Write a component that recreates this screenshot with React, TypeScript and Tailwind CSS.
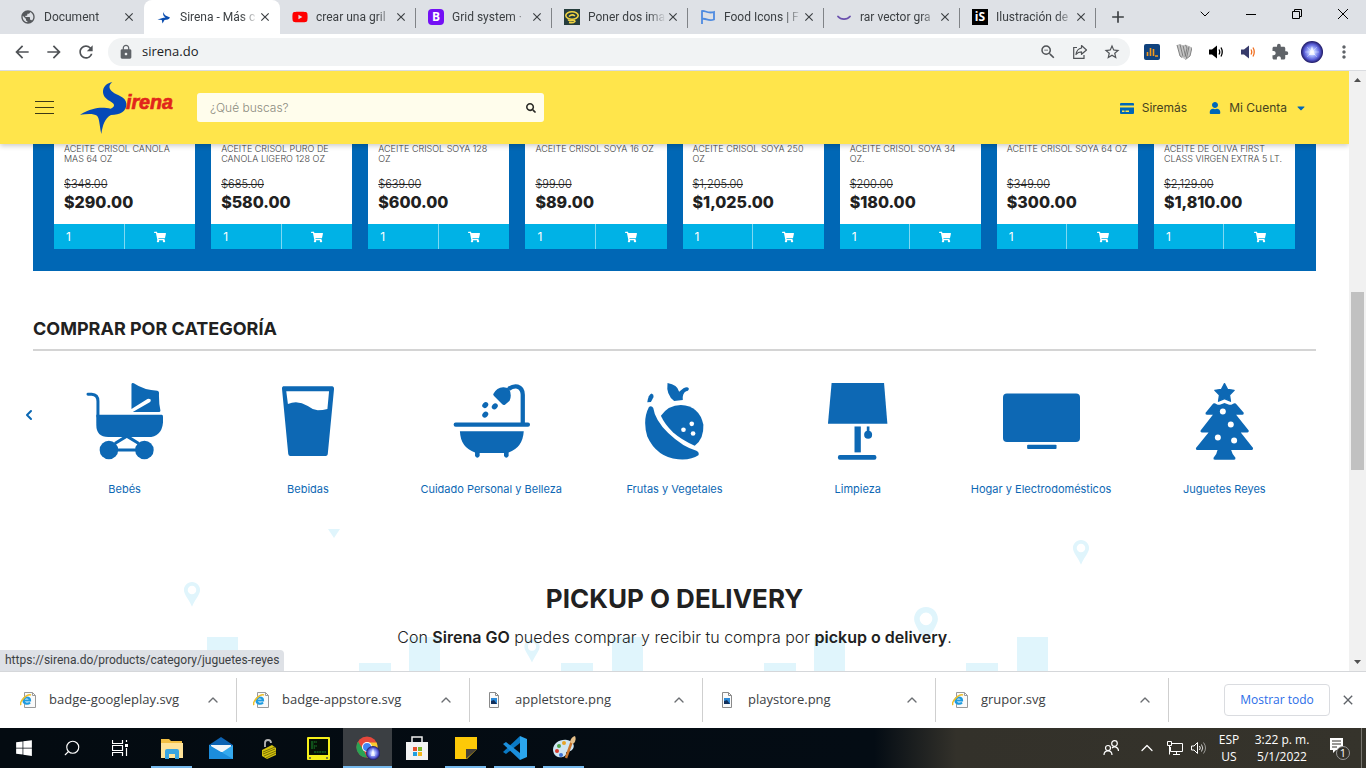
import type { ReactNode } from "react";
import {
  MdAdd,
  MdArrowBack,
  MdArrowForward,
  MdClose,
  MdExtension,
  MdLock,
  MdMoreVert,
  MdPublic,
  MdRefresh,
  MdStarBorder,
  MdZoomOut,
} from "react-icons/md";
import { FaCaretDown, FaSearch, FaShoppingCart, FaUser, FaWindows, FaYoutube } from "react-icons/fa";
import { ChevronDown, ChevronLeft, ChevronUp, Search } from "lucide-react";

/* ---------- Browser tabs ---------- */

const SirenaMark = () => (
  <svg viewBox="0 0 16 16" className="size-4">
    <path d="M9 2C7 3 7.500 5 9.500 6.500L14 8.500C13 10.500 11 10.800 8.500 11L6.500 14.500L5.800 11L1.500 10.500L7.500 8.800L9.500 8.500C7 7 6 4 9 2Z" fill="#0a4db0" />
  </svg>
);

const tabs: { title: string; icon: ReactNode; active?: boolean; divider?: boolean }[] = [
  { title: "Document", icon: <MdPublic className="size-4 text-[#55585c]" /> },
  { title: "Sirena - Más c", icon: <SirenaMark />, active: true },
  { title: "crear una gril", icon: <FaYoutube className="size-4 text-[#ff0000]" />, divider: true },
  {
    title: "Grid system ·",
    icon: <span className="flex size-4 items-center justify-center rounded-sm bg-[#7410f5] text-xs font-bold text-white">B</span>,
    divider: true,
  },
  {
    title: "Poner dos ima",
    icon: (
      <svg viewBox="0 0 16 16" className="size-4">
        <rect width="16" height="16" fill="#263d3d" />
        <ellipse cx="8" cy="6.500" rx="6.200" ry="3.800" fill="none" stroke="#f1d443" strokeWidth="1.600" />
        <path d="M5 7.500Q8 4.500 11 7M4 10.500Q5 12.500 8 11.500Q11 11 11 12.500Q9 14.500 5 13.500" fill="none" stroke="#f1d443" strokeWidth="1.500" />
      </svg>
    ),
    divider: true,
  },
  {
    title: "Food Icons | F",
    icon: (
      <svg viewBox="0 0 16 16" className="size-4">
        <path d="M2 15V2C5 1 7 5 14 3V10.500C8 13 6 8.500 2 10" fill="none" stroke="#4e8be0" strokeWidth="1.800" />
      </svg>
    ),
    divider: true,
  },
  {
    title: "rar vector gra",
    icon: (
      <svg viewBox="0 0 16 16" className="size-4">
        <path d="M2 7.500C5 11 11 11 14 7.500" fill="none" stroke="#6a50ae" strokeWidth="1.800" strokeLinecap="round" />
      </svg>
    ),
    divider: true,
  },
  {
    title: "Ilustración de",
    icon: <span className="flex size-4 items-center justify-center bg-black text-xs font-bold text-white">iS</span>,
    divider: true,
  },
];

function TabStrip() {
  return (
    <div className="flex h-[34px] shrink-0 bg-[#dee1e6] pl-2">
      {tabs.map((t) => (
        <div
          key={t.title}
          className={`relative flex w-34 min-w-0 items-center pr-2 pl-3 text-xs ${t.active ? "rounded-t-lg bg-white" : ""}`}
        >
          <span className="mr-2 shrink-0">{t.icon}</span>
          <span className="min-w-0 flex-1 overflow-hidden [mask-image:linear-gradient(to_right,black_78%,transparent)] font-['Roboto','Open_Sans',sans-serif] whitespace-nowrap text-[#3c4043]">
            {t.title}
          </span>
          <button aria-label={`Cerrar ${t.title}`} className="text-[#3c4043]">
            <MdClose className="size-3.5" />
          </button>
          {t.divider && <span className="absolute top-2 right-0 h-5 w-px bg-[#808387]" />}
        </div>
      ))}
      <button aria-label="Nueva pestaña" className="ml-3 text-[#3c4043]">
        <MdAdd className="size-5" />
      </button>
      <div className="ml-auto flex h-7 text-black">
        <button aria-label="Buscar pestañas" className="flex w-[46px] items-center justify-center">
          <ChevronDown className="size-4" strokeWidth={1.500} />
        </button>
        {[
          ["Minimizar", "M0 5.500H10"],
          ["Restaurar", "M.5 2.500H7.500V9.500H.5ZM2.500 2.500V.5H9.500V7.500H7.500"],
          ["Cerrar", "M0 0L10 10M10 0L0 10"],
        ].map(([label, d]) => (
          <button key={label} aria-label={label} className="flex w-[46px] items-center justify-center">
            <svg viewBox="0 0 10 10" className="size-2.5 overflow-visible">
              <path d={d} fill="none" stroke="currentColor" />
            </svg>
          </button>
        ))}
      </div>
    </div>
  );
}

/* ---------- Address bar ---------- */

const SpeakerIcon = ({ body, waves }: { body: string; waves: string }) => (
  <svg viewBox="0 0 16 16" className="size-4">
    <path d="M1 5.500H4L9 1.500V14.500L4 10.500H1Z" fill={body} />
    <path d="M11 5.500Q12.500 8 11 10.500M13 3.500Q15.500 8 13 12.500" fill="none" stroke={waves} strokeWidth="1.300" />
  </svg>
);

const extensions: { label: string; icon: ReactNode }[] = [
  {
    label: "Estadísticas",
    icon: (
      <svg viewBox="0 0 16 16" className="size-4">
        <rect width="16" height="16" rx="2" fill="#10427d" />
        <path d="M3.500 12V8M6.500 12V4M9.500 12V5M11 12H14" stroke="#f39a1e" strokeWidth="1.600" />
      </svg>
    ),
  },
  {
    label: "Notas",
    icon: (
      <svg viewBox="0 0 16 16" className="size-4">
        <path d="M1 1L4 0L7 1.500L9.500 .5L16 3.500L14 12L9.500 15.500L6 13.500L4 12Z" fill="#c4c4c4" />
        <path d="M1 1L4 12L6 13.500M4 .5L7 12.500M7 1.500L9.500 12M9.500 1L11 4L9 13M13 2.500L10.500 14M16 3.500L14 12L9.500 15.500" stroke="#777" fill="none" strokeWidth=".9" />
      </svg>
    ),
  },
  { label: "Volumen", icon: <SpeakerIcon body="#000" waves="#000" /> },
  { label: "Amplificador", icon: <SpeakerIcon body="#373b6b" waves="#f07022" /> },
  { label: "Extensiones", icon: <MdExtension className="size-4.5 text-[#5f6368]" /> },
  {
    label: "Perfil",
    icon: (
      <svg viewBox="0 0 22 22" className="size-5.5">
        <defs>
          <radialGradient id="orb">
            <stop offset="0" stopColor="#ffffff" />
            <stop offset=".35" stopColor="#a9b8ff" />
            <stop offset=".7" stopColor="#5a5fd8" />
            <stop offset="1" stopColor="#1b1560" />
          </radialGradient>
        </defs>
        <circle cx="11" cy="11" r="11" fill="url(#orb)" />
        <path d="M11 5L14 14H8Z" fill="#fff" opacity=".7" />
        <path d="M4 11H18M6 6L16 16M16 6L6 16" stroke="#fff" strokeWidth=".6" opacity=".5" />
      </svg>
    ),
  },
  { label: "Menú", icon: <MdMoreVert className="size-5 text-[#5f6368]" /> },
];

function AddressBar() {
  const nav = "flex w-8 items-center justify-center text-[#4f5256]";
  return (
    <div className="flex h-[37px] shrink-0 items-center border-b border-[#dadce0] bg-white pl-1.5">
      <button aria-label="Atrás" className={nav}><MdArrowBack className="size-5" /></button>
      <button aria-label="Adelante" className={nav}><MdArrowForward className="size-5" /></button>
      <button aria-label="Recargar" className={nav}><MdRefresh className="size-5" /></button>
      <div className="ml-1.5 flex h-7 flex-1 items-center rounded-full bg-[#f1f3f4] pr-0.5 pl-2.5">
        <MdLock className="size-4 text-[#5f6368]" />
        <input
          aria-label="Dirección"
          defaultValue="sirena.do"
          className="ml-2 min-w-0 flex-1 bg-transparent text-[13px] text-[#202124] outline-none"
        />
        <button aria-label="Zoom" className={nav}><MdZoomOut className="size-4.5" /></button>
        <button aria-label="Compartir" className={nav}>
          <svg viewBox="0 0 16 16" className="size-4">
            <path d="M5 3.500H1.700V14.300H12V11" fill="none" stroke="currentColor" strokeWidth="1.200" />
            <path d="M9.500 1.500L14.500 6L9.500 10.300V7.800C7.500 7.800 5.500 8.500 4 10.500C4.500 7 6.500 4.500 9.500 4Z" fill="none" stroke="currentColor" strokeWidth="1.200" strokeLinejoin="round" />
          </svg>
        </button>
        <button aria-label="Favorito" className={nav}><MdStarBorder className="size-4.5" /></button>
      </div>
      <div className="flex pr-1.5 pl-1.5">
        {extensions.map((e) => (
          <button key={e.label} aria-label={e.label} className={nav}>
            {e.icon}
          </button>
        ))}
      </div>
    </div>
  );
}

/* ---------- Store header ---------- */

function StoreHeader() {
  return (
    <header className="relative z-10 flex h-[73px] shrink-0 items-center bg-[#ffe54b] pr-[42px] pl-[35px] text-xs text-[#46431f] shadow-[0_2px_5px_rgba(0,0,0,0.2)]">
      <button aria-label="Abrir menú" className="flex w-[19px] flex-col gap-[5px]">
        <span className="h-px bg-[#3c3916]" />
        <span className="h-px bg-[#3c3916]" />
        <span className="h-px bg-[#3c3916]" />
      </button>
      <a href="#inicio" aria-label="Sirena" className="ml-[26px]">
        <svg viewBox="240 246 282 156" className="h-[52px] w-[94px] overflow-visible">
          <path
            d="M337 247C322 248 308 260 309 277C310 292 322 299 334 306C346 313 344 321 332 326C310 322 285 318 240 344C262 341 282 340 291 347C299 356 298 375 304 402C308 375 315 354 333 345C360 344 380 335 379 311C378 290 350 286 338 276C326 267 325 255 337 247Z"
            fill="#0549b8"
          />
          <text x="378" y="328" fontFamily="Liberation Sans, Arial, sans-serif" fontSize="59" fontWeight="bold" fontStyle="italic" fill="#e1251b" stroke="#e1251b" strokeWidth="2">
            irena
          </text>
        </svg>
      </a>
      <form className="ml-[23px] flex h-[29px] w-[347px] items-center rounded-[3px] bg-[#fffdec] pr-2 pl-[13px]">
        <input
          type="search"
          aria-label="¿Qué buscas?"
          placeholder="¿Qué buscas?"
          className="min-w-0 flex-1 bg-transparent text-xs font-light outline-none placeholder:text-[#8c8b80]"
        />
        <button type="button" aria-label="Buscar" className="text-[#2a2a26]">
          <FaSearch className="size-2.5" />
        </button>
      </form>
      <nav className="ml-auto flex items-center">
        <a href="#siremas" className="flex items-center gap-2">
          <svg viewBox="0 0 14 12" className="h-3 w-3.5" fill="#0067b8">
            <path d="M1 1H13Q14 1 14 2V3.500H0V2Q0 1 1 1ZM0 5.500H14V11Q14 12 13 12H1Q0 12 0 11ZM2 8.500V10H4.500V8.500ZM5.500 8.500V10H9V8.500Z" fillRule="evenodd" />
          </svg>
          Siremás
        </a>
        <button className="ml-[22px] flex items-center">
          <FaUser className="size-3 text-[#0067b8]" />
          <span className="ml-2">Mi Cuenta</span>
          <FaCaretDown className="ml-2 size-3 text-[#0067b8]" />
        </button>
      </nav>
    </header>
  );
}

/* ---------- Products ---------- */

const products = [
  { name: "ACEITE CRISOL CANOLA\nMAS 64 OZ", was: "$348.00", now: "$290.00" },
  { name: "ACEITE CRISOL PURO DE\nCANOLA LIGERO 128 OZ", was: "$685.00", now: "$580.00" },
  { name: "ACEITE CRISOL SOYA 128\nOZ", was: "$639.00", now: "$600.00" },
  { name: "ACEITE CRISOL SOYA 16 OZ", was: "$99.00", now: "$89.00" },
  { name: "ACEITE CRISOL SOYA 250\nOZ", was: "$1,205.00", now: "$1,025.00" },
  { name: "ACEITE CRISOL SOYA 34\nOZ.", was: "$200.00", now: "$180.00" },
  { name: "ACEITE CRISOL SOYA 64 OZ", was: "$349.00", now: "$300.00" },
  { name: "ACEITE DE OLIVA FIRST\nCLASS VIRGEN EXTRA 5 LT.", was: "$2,129.00", now: "$1,810.00" },
];

function Products() {
  return (
    <section className="mx-[33px] grid grid-cols-8 gap-4 bg-[#0067b5] px-[21px] pb-[22px]">
      {products.map((p) => (
        <article key={p.name} className="flex min-w-0 flex-col bg-white">
          <div className="flex flex-1 flex-col pl-2.5 text-[#212121]">
            <h3 className="h-[30px] text-[9px] leading-[10px] font-light whitespace-pre text-[#444]">{p.name}</h3>
            <s className="mt-1 text-[11px] leading-3 font-light">{p.was}</s>
            <strong className="mt-0.5 mb-3 text-base leading-5 font-extrabold">{p.now}</strong>
          </div>
          <div className="flex h-[25px] bg-[#00b2e6] text-white">
            <input
              aria-label={`Cantidad de ${p.name}`}
              defaultValue="1"
              className="w-1/2 border-r border-[#7fd8f2] bg-transparent pl-3 text-xs outline-none"
            />
            <button aria-label={`Agregar ${p.name}`} className="flex flex-1 items-center justify-center">
              <FaShoppingCart className="size-3" />
            </button>
          </div>
        </article>
      ))}
    </section>
  );
}

/* ---------- Categories ---------- */

const drop = (x: number, y: number) => <ellipse cx={x} cy={y} rx="10" ry="8" transform={`rotate(-45 ${x} ${y})`} />;

const categories: { label: string; box: string; art: ReactNode }[] = [
  {
    label: "Bebés",
    box: "258 39 232 232",
    art: (
      <>
        <path d="M264 73H275Q294 74 294 94V140" fill="none" stroke="currentColor" strokeWidth="9" strokeLinecap="round" />
        <path d="M289 135H486Q490 135 490 140V158Q486 202 445 202H325Q289 202 289 165Z" />
        <path d="M395 43Q396 37 402 40Q435 62 473 62Q478 63 478 68Q477 100 482 120Q483 126 479 126H399L450 97Q455 93 452 88Q448 85 443 87L395 117Z" />
        <circle cx="327" cy="241" r="28" />
        <circle cx="434" cy="241" r="28" />
        <path d="M327 241H434M345 221L381 199L417 221" fill="none" stroke="currentColor" strokeWidth="9" />
      </>
    ),
  },
  {
    label: "Bebidas",
    box: "808 39 232 232",
    art: <path fillRule="evenodd" d="M851 49H999Q1004 50 1004 56L985 254Q984 259 979 259H872Q867 259 866 253L847 55Q847 50 851 49ZM860 64L865 102Q895 90 925 108Q940 120 955 121Q970 121 984 117L989 64Z" />,
  },
  {
    label: "Cuidado Personal y Belleza",
    box: "-6 39 234 232",
    art: (
      <>
        <rect x="-4" y="158" width="232" height="13" rx="6" />
        <path d="M15 185H209Q206 235 163 249V260Q156 270 149 260V251H75V260Q68 270 61 260V249Q17 235 15 185Z" />
        <path d="M163 56Q177 46 190 49Q206 54 206 74V162" fill="none" stroke="currentColor" strokeWidth="13" />
        <path d="M116 72Q128 50 148 51L164 54Q174 75 166 92L152 104Q147 106 143 102L118 77Z" />
        {drop(92, 105)}
        {drop(121, 109)}
        {drop(92, 134)}
      </>
    ),
  },
  {
    label: "Frutas y Vegetales",
    box: "543 39 232 232",
    art: (
      <>
        <path d="M582 111Q590 106 595 114Q600 150 640 190Q685 233 725 243Q735 248 731 257Q710 272 670 269Q605 262 577 200Q562 150 582 111Z" />
        <path d="M577 97Q580 75 590 71Q597 73 596 81L588 96Z" />
        <path d="M618 138Q640 105 678 105Q735 108 746 165Q748 208 720 228Q680 210 655 188Q630 165 618 138Z" />
        <path d="M638 39Q668 44 673 65L686 55Q698 48 702 55Q703 63 694 64Q682 70 684 90L658 93Q633 75 638 39Z" />
        <g fill="#fff">
          <circle cx="711" cy="162" r="7" />
          <circle cx="686" cy="180" r="7" />
          <circle cx="715" cy="191" r="7" />
        </g>
      </>
    ),
  },
  {
    label: "Limpieza",
    box: "1093 39 232 232",
    art: (
      <>
        <path d="M1131 39H1289L1299 162H1120Z" />
        <rect x="1200" y="170" width="19" height="78" />
        <rect x="1150" y="256" width="116" height="14" rx="6" />
        <rect x="1237" y="170" width="8" height="16" />
        <circle cx="1241" cy="195" r="12" />
      </>
    ),
  },
  {
    label: "Hogar y Electrodomésticos",
    box: "277 39 233 232",
    art: (
      <>
        <rect x="277" y="70" width="233" height="147" rx="12" />
        <rect x="350" y="225" width="89" height="13" rx="3" />
      </>
    ),
  },
  {
    label: "Juguetes Reyes",
    box: "827 39 232 232",
    art: (
      <>
        <path d="M943 41L952 58L972 61L958 75L961 94L943 86L925 94L928 75L914 61L934 58Z" stroke="currentColor" strokeWidth="4" strokeLinejoin="round" />
        <path d="M909 101Q914 98 918 102Q925 106 931 104L943 99L955 104Q961 106 968 102Q973 98 977 101L1001 129Q1002 135 997 135H978L1016 182Q1017 188 1012 188H992L1029 235Q1030 241 1025 241H963Q966 254 976 264Q977 270 972 270H914Q908 270 910 264Q920 254 922 241H861Q855 241 857 235L895 188H875Q869 188 871 182L908 135H890Q884 135 886 129Z" />
        <g fill="#fff">
          <circle cx="938" cy="125" r="9" />
          <circle cx="962" cy="164" r="9" />
          <circle cx="923" cy="203" r="9" />
          <circle cx="972" cy="212" r="9" />
        </g>
      </>
    ),
  },
];

function Categories() {
  return (
    <section className="relative mx-[33px] mt-[46px]">
      <h2 className="border-b-2 border-[#d4d4d4] pb-2 text-lg leading-6 font-bold text-[#212121]">COMPRAR POR CATEGORÍA</h2>
      <button aria-label="Anterior" className="absolute top-[90px] -left-3 text-[#0a67b3]">
        <ChevronLeft className="size-4" strokeWidth={3} />
      </button>
      <ul className="mt-8 grid grid-cols-7 text-[#0d68b4]">
        {categories.map((c) => (
          <li key={c.label}>
            <a href="#categoria" className="flex flex-col items-center">
              <svg viewBox={c.box} className="size-[77px]" fill="currentColor">
                {c.art}
              </svg>
              <span className="mt-[21px] text-[11px] leading-4 whitespace-nowrap">{c.label}</span>
            </a>
          </li>
        ))}
      </ul>
    </section>
  );
}

/* ---------- Pickup banner ---------- */

const Pin = ({ x, y, s }: { x: number; y: number; s: number }) => (
  <path transform={`translate(${x} ${y}) scale(${s})`} fillRule="evenodd" d="M0 0C5 0 8.500 4 8.500 8.500C8.500 13 3 19 0 26C-3 19-8.500 13-8.500 8.500C-8.500 4-5 0 0 0ZM0 4A4.500 4.500 0 1 0 0 13A4.500 4.500 0 1 0 0 4Z" />
);

function Pickup() {
  return (
    <section className="relative mt-8 flex-1 text-center text-[#212121]">
      <svg viewBox="0 0 1349 142" preserveAspectRatio="xMidYMin slice" className="absolute inset-0 size-full" fill="#e0f5fc">
        <path d="M328 0H340L334 9Z" />
        <Pin x={192} y={53} s={0.95} />
        <Pin x={532} y={110} s={0.9} />
        <Pin x={926} y={78} s={1.4} />
        <Pin x={1081} y={11} s={0.95} />
        <path d="M207 108H238V142H207ZM359 134H391V142H359ZM409 108H440V142H409ZM561 134H593V142H561ZM612 108H643V142H612ZM764 134H796V142H764ZM814 108H845V142H814ZM966 134H998V142H966ZM1017 108H1048V142H1017Z" />
      </svg>
      <div className="relative">
        <h2 className="pt-[54px] text-[26px] leading-8 font-bold">PICKUP O DELIVERY</h2>
        <p className="mt-3 text-base leading-5 font-light">
          Con <b className="font-semibold">Sirena GO</b> puedes comprar y recibir tu compra por{" "}
          <b className="font-semibold">pickup o delivery</b>.
        </p>
      </div>
    </section>
  );
}

function Scrollbar() {
  return (
    <div className="flex w-[17px] shrink-0 flex-col items-center bg-[#f1f1f1]">
      <svg viewBox="0 0 17 17" className="size-[17px] shrink-0"><path d="M5 11H12L8.500 7Z" fill="#505050" /></svg>
      <span className="h-51 shrink-0" />
      <span className="h-[178px] w-[13px] shrink-0 bg-[#c1c1c1]" />
      <svg viewBox="0 0 17 17" className="mt-auto size-[17px] shrink-0"><path d="M5 6H12L8.500 10Z" fill="#505050" /></svg>
    </div>
  );
}

/* ---------- Downloads ---------- */

const FileIcon = ({ kind }: { kind: "svg" | "png" }) => (
  <svg viewBox="0 0 16 18" className="h-4.5 w-4">
    {kind === "svg" ? (
      <>
        <path d="M4.500 1.500H12.500L15.500 4.500V16.500H4.500ZM12.500 1.500V4.500H15.500" fill="#fafafa" stroke="#9a9a9a" />
        <path d="M3 9.500H10C10 5.500 3.500 5.500 3.500 9.500C3.500 13 8 13.500 10 11.500" fill="none" stroke="#1e9be0" strokeWidth="2.200" />
        <path d="M1 14C-1 11 7 2 11 4" fill="none" stroke="#eebf2c" strokeWidth="1.500" />
      </>
    ) : (
      <>
        <path d="M3.500 1.500H9.500L12.500 4.500V16.500H3.500ZM9.500 1.500V4.500H12.500" fill="#fafafa" stroke="#8a8a8a" />
        <rect x="5" y="7" width="6" height="6" fill="#2b8ad8" />
        <path d="M5 13V10L8 9L11 13Z" fill="#12305c" />
      </>
    )}
  </svg>
);

const downloads: { name: string; kind: "svg" | "png" }[] = [
  { name: "badge-googleplay.svg", kind: "svg" },
  { name: "badge-appstore.svg", kind: "svg" },
  { name: "appletstore.png", kind: "png" },
  { name: "playstore.png", kind: "png" },
  { name: "grupor.svg", kind: "svg" },
];

function Downloads() {
  return (
    <div className="flex h-[57px] shrink-0 items-center border-t border-[#d5d7da] bg-white pr-2.5 pl-1 text-[13px] text-[#3c4043]">
      {downloads.map((d) => (
        <div key={d.name} className="flex h-11 w-[233px] min-w-0 items-center border-r border-[#cfcfcf] pr-[15px] pl-4">
          <FileIcon kind={d.kind} />
          <span className="ml-[13px] flex-1 truncate">{d.name}</span>
          <button aria-label={`Opciones de ${d.name}`} className="text-[#6b6e72]">
            <ChevronUp className="size-4" />
          </button>
        </div>
      ))}
      <button className="ml-auto h-8 w-[106px] shrink-0 rounded border border-[#dadce0] text-xs font-medium text-[#2a6de8]">Mostrar todo</button>
      <button aria-label="Cerrar descargas" className="ml-2.5 text-[#5f6368]">
        <MdClose className="size-4" />
      </button>
    </div>
  );
}

/* ---------- Taskbar ---------- */

const apps: { label: string; open?: boolean; active?: boolean; art: ReactNode }[] = [
  {
    label: "Explorador de archivos",
    open: true,
    art: (
      <>
        <path d="M1 3H9L11 5H22V21H1Z" fill="#f3bf43" />
        <path d="M1 7H23V22H1Z" fill="#ffe398" />
        <path d="M5 23V15Q5 13 7 13H17Q19 13 19 15V23H15V18H9V23Z" fill="#3aa5e0" />
      </>
    ),
  },
  {
    label: "Correo",
    art: (
      <>
        <path d="M0 9L12 1L24 9V23H0Z" fill="#0d63b3" />
        <path d="M2 9H22V16H2Z" fill="#f2f6fa" />
        <path d="M0 9L12 17L24 9V23H0Z" fill="#35a9ee" />
        <path d="M0 9L24 23H0Z" fill="#1c8ddd" />
      </>
    ),
  },
  {
    label: "Candado",
    art: (
      <>
        <path d="M7 11V7Q7 4 10 4Q13 4 13 7" fill="none" stroke="#b7b7b7" strokeWidth="1.800" />
        <path d="M4 14L14 9L18 12V19L9 23L4 20Z" fill="#d3c20e" />
        <path d="M5 16L17 11M5 18L17 13M6 20L18 15M8 22L18 17" stroke="#665d00" strokeWidth=".8" />
      </>
    ),
  },
  {
    label: "Terminal",
    art: (
      <>
        <rect x="0" y="1" width="23" height="23" rx="1" fill="#f6f01a" />
        <rect x="2" y="3" width="19" height="16" fill="#061006" />
        <path d="M4 6H10M4 8H7M4 10H10M4 12H8M7 16H19" stroke="#22b03a" strokeWidth=".8" strokeDasharray="2 .6" />
        <path d="M2 22H4M19 22H21" stroke="#555" strokeWidth="1.500" />
      </>
    ),
  },
  {
    label: "Chrome",
    active: true,
    art: (
      <>
        <circle cx="11" cy="11" r="10.500" fill="#e5483c" />
        <path d="M2 5.500L8 15L11 21.500A10.500 10.500 0 0 1 2 5.500Z" fill="#2aa354" />
        <path d="M11 6.500H20.500A10.500 10.500 0 0 1 11 21.500L15.500 13Z" fill="#f8ca2f" />
        <circle cx="11" cy="11" r="5" fill="#fff" />
        <circle cx="11" cy="11" r="4" fill="#4285f4" />
        <circle cx="17" cy="17" r="7" fill="url(#orb)" />
        <path d="M17 12L19 20H15Z" fill="#fff" opacity=".7" />
      </>
    ),
  },
  {
    label: "Microsoft Store",
    art: (
      <>
        <path d="M7 7V1H17V7" fill="none" stroke="#eee" strokeWidth="1.500" />
        <path d="M1 6H23V24H1Z" fill="#f3f3f3" />
        <path d="M8 11H12V15H8Z" fill="#e8502c" />
        <path d="M13 11H17V15H13Z" fill="#7db72f" />
        <path d="M8 16H12V20H8Z" fill="#1f9fe0" />
        <path d="M13 16H17V20H13Z" fill="#f5b61a" />
      </>
    ),
  },
  {
    label: "Notas rápidas",
    open: true,
    art: (
      <>
        <path d="M1 1H23V13L13 23H1Z" fill="#fdc908" />
        <path d="M12 23V13H23Z" fill="#454038" />
      </>
    ),
  },
  {
    label: "Visual Studio Code",
    open: true,
    art: (
      <>
        <path d="M17 0V7L3 18L0 16Z" fill="#0a79c4" />
        <path d="M0 8L3 6L17 17V24Z" fill="#1b8fdc" />
        <path d="M17 0L24 3V21L17 24Z" fill="#2ba6ee" />
      </>
    ),
  },
  {
    label: "Paint",
    open: true,
    art: (
      <>
        <path d="M1 14C1 7 8 3 15 4C21 5 24 10 20 14C17 17 14 14 14 18C14 22 2 24 1 14Z" fill="#cfe5f2" />
        <circle cx="7" cy="10" r="2" fill="#4da34a" />
        <circle cx="12" cy="7" r="2" fill="#e7a326" />
        <circle cx="5" cy="15" r="2" fill="#d63b2e" />
        <circle cx="9" cy="19" r="2" fill="#3b6fd2" />
        <path d="M20 5L14 22" stroke="#c9752d" strokeWidth="2.500" />
        <path d="M18 6Q19 1 23 0Q25 5 21 8Z" fill="#e6c08a" />
      </>
    ),
  },
];

function Taskbar() {
  const sys = "flex h-full items-center justify-center";
  return (
    <div className="flex h-10 shrink-0 items-center bg-[linear-gradient(to_right,#040b11_0%,#040c14_64%,#33312a_70%,#35332b_100%)] text-white">
      <button aria-label="Inicio" className={`${sys} w-12`}><FaWindows className="size-4.5" /></button>
      <button aria-label="Buscar" className={`${sys} w-12`}><Search className="size-4.5 -scale-x-100" strokeWidth={1.500} /></button>
      <button aria-label="Vista de tareas" className={`${sys} w-12`}>
        <svg viewBox="0 0 16 16" className="size-4">
          <path d="M.5 0V3.500H10.500V0M.5 16V12.500H10.500V16M.5 5.500H10.500V10.500H.5ZM14.500 0V2M14.500 8V16" fill="none" stroke="#fff" strokeWidth="1.200" />
          <path d="M13 4H16V7H13Z" fill="#fff" />
        </svg>
      </button>
      <div className="ml-[3px] flex h-full">
        {apps.map((a) => (
          <button
            key={a.label}
            aria-label={a.label}
            className={`relative flex w-[49px] items-center justify-center ${a.active ? "bg-[#3b3f43]" : ""}`}
          >
            <svg viewBox="0 0 24 24" className="size-6">{a.art}</svg>
            {(a.open || a.active) && <span className={`absolute bottom-0 h-0.5 bg-[#76b9ed] ${a.active ? "inset-x-0" : "inset-x-1"}`} />}
          </button>
        ))}
      </div>
      <div className="ml-auto flex h-full items-center text-xs leading-[17px]">
        <button aria-label="Contactos" className={`${sys} w-10`}>
          <svg viewBox="0 0 16 16" className="size-4" fill="none" stroke="#fff" strokeWidth="1.200">
            <circle cx="5" cy="8" r="2.500" />
            <circle cx="11.500" cy="3.500" r="2.800" />
            <path d="M1 15C1 9.500 9 9.500 9 15M9 8C11 6 15.500 6.500 15.500 11" />
          </svg>
        </button>
        <button aria-label="Iconos ocultos" className={`${sys} w-8`}><ChevronUp className="size-5" strokeWidth={1.500} /></button>
        <button aria-label="Red" className={`${sys} w-6`}>
          <svg viewBox="0 0 16 16" className="size-4" fill="none" stroke="#fff">
            <path d="M5 3.500H15.500V11.500H3.500V7M.5 1.500H4.500V5.500H.5ZM2.500 5.500V14.500M9.500 11.500V14.500M6 14.500H13" />
          </svg>
        </button>
        <button aria-label="Volumen del sistema" className={`${sys} w-6`}>
          <svg viewBox="0 0 16 16" className="size-4" fill="none" stroke="#fff">
            <path d="M.5 6H3L6.500 2.500V13.500L3 10H.5ZM8.500 6Q10 8 8.500 10" />
            <path d="M10.500 4.500Q13 8 10.500 11.500" opacity=".8" />
            <path d="M12.500 2.500Q16.500 8 12.500 13.500" opacity=".5" />
          </svg>
        </button>
        <span className="w-9 text-center">ESP<br />US</span>
        <span className="w-[70px] text-center">3:22 p. m.<br />5/1/2022</span>
        <button aria-label="Notificaciones" className={`${sys} w-11`}>
          <svg viewBox="0 0 22 24" className="h-6 w-5.5">
            <path d="M2 2H15V14H8L5 17V14H2Z" fill="#fff" />
            <path d="M4 5H13M4 8H13M4 11H9" stroke="#33312a" />
            <circle cx="15" cy="17" r="6.500" fill="#33312a" stroke="#999" />
            <text x="15" y="21" textAnchor="middle" fontSize="11" fill="#fff">1</text>
          </svg>
        </button>
        <span className="mr-1 h-full w-px bg-[#77756f]" />
      </div>
    </div>
  );
}

export default function App() {
  return (
    <div className="flex h-screen flex-col overflow-hidden bg-white font-['Open_Sans','Noto_Sans',sans-serif]">
      <TabStrip />
      <AddressBar />
      <div className="relative flex min-h-0 flex-1">
        <main className="flex min-w-0 flex-1 flex-col overflow-hidden font-['Inter','Open_Sans',sans-serif]">
          <StoreHeader />
          <Products />
          <Categories />
          <Pickup />
        </main>
        <Scrollbar />
        <div className="absolute bottom-0 left-0 h-[21px] rounded-tr bg-[#dee1e6] px-[5px] font-['Roboto','Open_Sans',sans-serif] text-xs leading-[21px] text-[#3c4043]">
          https://sirena.do/products/category/juguetes-reyes
        </div>
      </div>
      <Downloads />
      <Taskbar />
    </div>
  );
}
